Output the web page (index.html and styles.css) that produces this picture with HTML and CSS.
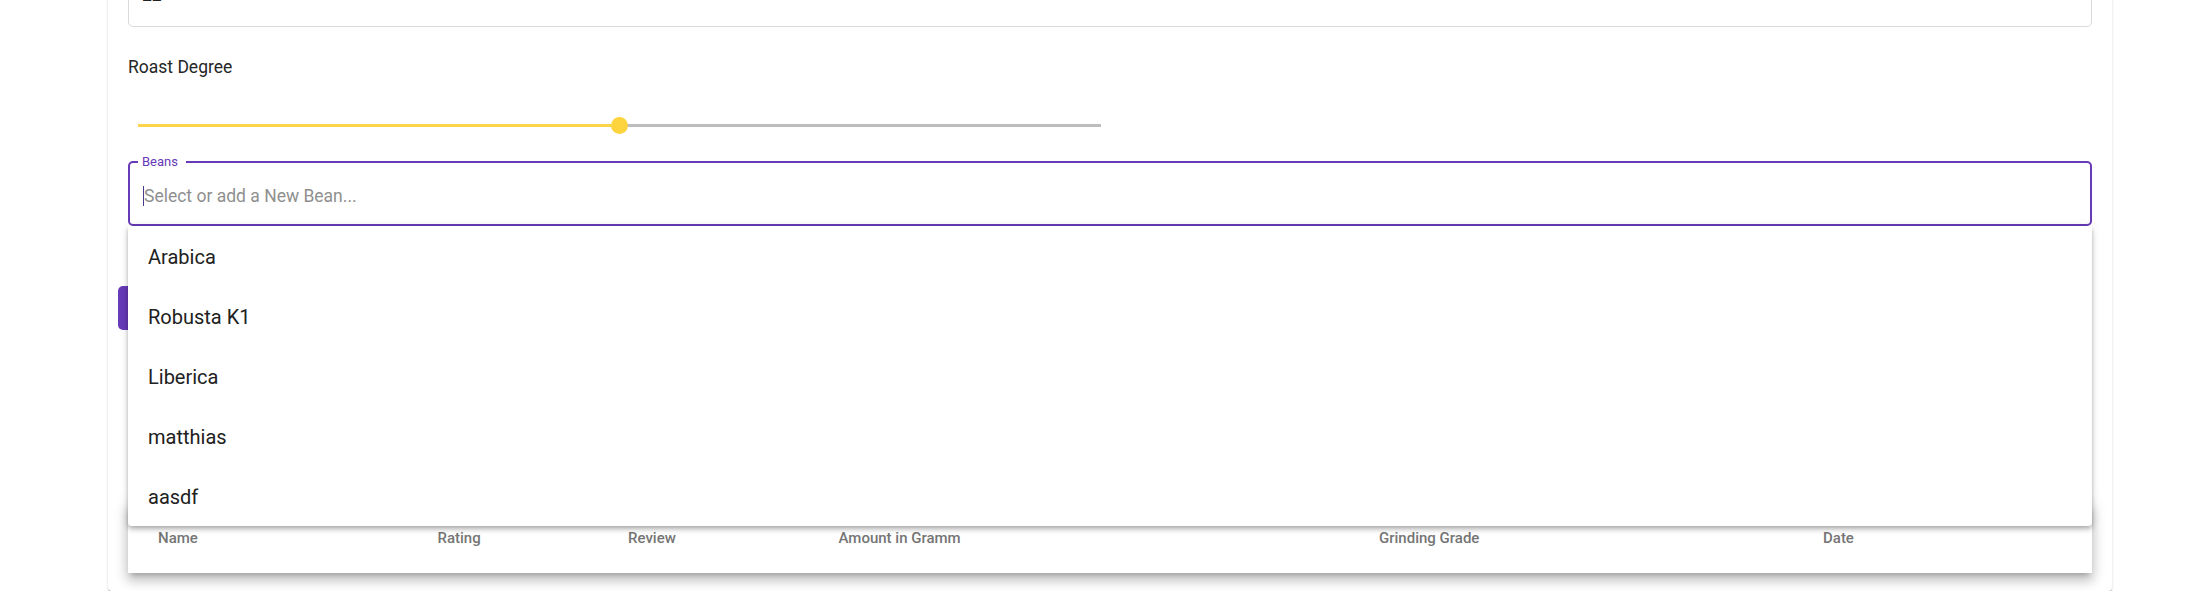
FILE: index.html
```html
<!DOCTYPE html>
<html lang="en">
<head>
<meta charset="utf-8">
<title>Brew</title>
<link rel="stylesheet" href="styles.css">
</head>
<body>
<main class="card">
  <div class="field-outline">
    <div class="field-value">22</div>
  </div>

  <div class="slider-label">Roast Degree</div>
  <div class="slider">
    <div class="slider-track">
      <div class="track-fill" style="width: 50%"></div>
      <div class="track-rest"></div>
      <div class="thumb" style="left: 50%"></div>
    </div>
  </div>

  <div class="autocomplete">
    <fieldset class="field-focused">
      <legend class="field-label">Beans</legend>
      <div class="field-input">
        <span class="caret"></span>
        <span class="placeholder">Select or add a New Bean...</span>
      </div>
    </fieldset>
    <ul class="options">
      <li class="option">Arabica</li>
      <li class="option">Robusta K1</li>
      <li class="option">Liberica</li>
      <li class="option">matthias</li>
      <li class="option">aasdf</li>
    </ul>
  </div>

  <button class="btn-primary" aria-label="Add"></button>

  <section class="table-card">
    <div class="header-row">
      <div class="th">Name</div>
      <div class="th">Rating</div>
      <div class="th">Review</div>
      <div class="th">Amount in Gramm</div>
      <div class="th">Grinding Grade</div>
      <div class="th">Date</div>
    </div>
  </section>
</main>
</body>
</html>
```

FILE: styles.css
```css
* { box-sizing: border-box; }

html, body {
  margin: 0;
  padding: 0;
  background: #ffffff;
  overflow: hidden;
  font-family: Roboto, "Liberation Sans", sans-serif;
  color: #212121;
}

.card {
  display: flex;
  flex-direction: column;
  width: 2004px;
  margin: -55px 0 0 108px;
  padding: 20px 20px 18px 20px;
  background: #fff;
  border-radius: 4px;
  box-shadow: 0 2px 1px -1px rgba(0,0,0,.2), 0 1px 1px 0 rgba(0,0,0,.14), 0 1px 3px 0 rgba(0,0,0,.12);
}

.field-outline {
  height: 62px;
  border: 1px solid #dadada;
  border-radius: 5px;
  padding: 19px 13px 21px 13px;
}

.field-value {
  font-size: 17.5px;
  line-height: 20px;
  color: #212121;
}

.slider-label {
  margin-top: 30px;
  font-size: 17.5px;
  line-height: 20px;
  color: #262626;
}

.slider {
  margin-top: 18px;
  width: 983px;
  height: 60px;
  padding: 0 10px;
  display: flex;
  align-items: center;
}

.slider-track {
  position: relative;
  display: flex;
  width: 100%;
  height: 3px;
}

.track-fill {
  background: #fbd44a;
  height: 100%;
}

.track-rest {
  flex: 1;
  background: #bdbdbd;
  height: 100%;
}

.thumb {
  position: absolute;
  top: 50%;
  width: 17px;
  height: 17px;
  margin: -8.5px 0 0 -8.5px;
  border-radius: 50%;
  background: #fdd43e;
}

.autocomplete {
  position: relative;
  z-index: 2;
}

.field-focused {
  margin: 0;
  padding: 0 13px;
  border: 2px solid #673ab7;
  border-radius: 5px;
  min-width: 0;
}

.field-label {
  margin-left: -5px;
  padding: 0 8px 0 4px;
  font-size: 13px;
  line-height: 14px;
  color: #673ab7;
}

.field-input {
  display: flex;
  align-items: center;
  padding: 17px 0 18px 0;
  font-size: 17.5px;
  line-height: 20px;
}

.caret {
  width: 1px;
  height: 20px;
  background: #4a3a8c;
}

.placeholder {
  color: #8f8f8f;
}

.options {
  position: absolute;
  top: 100%;
  left: 0;
  right: 0;
  margin: 0;
  padding: 0;
  list-style: none;
  background: #fff;
  border-radius: 0 0 4px 4px;
  box-shadow: 0 2px 4px -1px rgba(0,0,0,.2), 0 4px 5px 0 rgba(0,0,0,.14), 0 1px 10px 0 rgba(0,0,0,.12);
}

.option {
  display: flex;
  align-items: center;
  height: 60px;
  padding: 2px 20px 0 20px;
  font-size: 20px;
  line-height: 24px;
  color: #212121;
}

.btn-primary {
  align-self: flex-start;
  margin: 60px 0 0 -10px;
  width: 160px;
  height: 44px;
  border: 0;
  border-radius: 5px;
  background: #673ab7;
}

.table-card {
  margin-top: 173px;
  background: #fff;
  box-shadow: 0 5px 5px -3px rgba(0,0,0,.2), 0 8px 10px 1px rgba(0,0,0,.14), 0 3px 14px 2px rgba(0,0,0,.12);
}

.header-row {
  display: grid;
  grid-template-columns: 279.5px 190.5px 210.5px 540.5px 444px 1fr;
  height: 70px;
  padding-left: 30px;
  align-items: center;
}

.th {
  font-size: 15px;
  font-weight: 500;
  line-height: 70px;
  color: #757575;
}
```
